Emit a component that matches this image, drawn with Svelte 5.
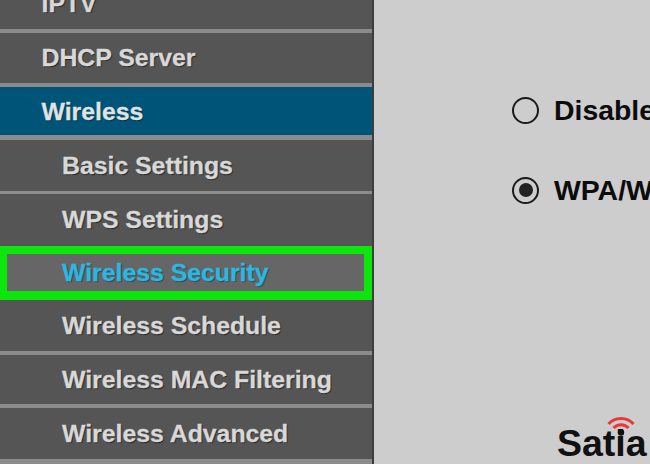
<script>
  const rows = [
    { label: 'IPTV', h: 29, sep: 4, cls: 'top first' },
    { label: 'DHCP Server', h: 50, sep: 4, cls: 'top' },
    { label: 'Wireless', h: 48, sep: 5, cls: 'top active' },
    { label: 'Basic Settings', h: 51, sep: 3, cls: 'sub' },
    { label: 'WPS Settings', h: 52, sep: 0, cls: 'sub' },
    { label: 'Wireless Security', h: 54, sep: 0, cls: 'sub selected' },
    { label: 'Wireless Schedule', h: 51, sep: 4, cls: 'sub' },
    { label: 'Wireless MAC Filtering', h: 49, sep: 4, cls: 'sub' },
    { label: 'Wireless Advanced', h: 51, sep: 4, cls: 'sub' }
  ];
</script>

<div class="page">
  <nav class="side">
    {#each rows as r}
      <div class="row {r.cls}" style="height:{r.h}px;margin-bottom:{r.sep}px"><span>{r.label}</span></div>
    {/each}
  </nav>
  <main class="panel">
    <div class="opt first-opt"><span class="radio"></span><b>Disabled</b></div>
    <div class="opt"><span class="radio on"></span><b>WPA/WPA2</b></div>
    <div class="logo">
      <svg class="wifi" viewBox="0 0 28 20" width="28" height="20" aria-hidden="true">
        <path d="M1.5 8 C8 0.5 20 0.5 26.5 8" fill="none" stroke="#e8383a" stroke-width="3"/>
        <path d="M6.5 12 C10.5 7.5 17.5 7.5 21.5 12" fill="none" stroke="#e8383a" stroke-width="3"/>
        <circle cx="14" cy="16.5" r="3.2" fill="#111"/>
      </svg>
      <span>Satia</span>
    </div>
  </main>
</div>

<style>
  :global(body) { margin: 0; }
  .page {
    width: 650px;
    height: 464px;
    overflow: hidden;
    display: flex;
    background: #cdcdcd;
    font-family: "Liberation Sans", Arial, sans-serif;
  }
  .side {
    width: 372px;
    flex: none;
    border-right: 2px solid #3e3e3e;
    background: #8b8b8b;
    display: flex;
    flex-direction: column;
    overflow: hidden;
  }
  .row {
    flex: none;
    display: flex;
    align-items: center;
    background: #555555;
    color: #d8d8d8;
    font-weight: 700;
    font-size: 24.8px;
    box-sizing: border-box;
    text-shadow: 1px 1px 1px #262626;
    -webkit-text-stroke: 0.3px currentColor;
    white-space: nowrap;
  }
  .top { padding-left: 41.5px; }
  .sub { padding-left: 62px; }
  .first { align-items: flex-end; padding-bottom: 11px; }
  .active { background: #005478; color: #dfe3e6; text-shadow: 1px 1px 1px #0a3042; padding-top: 2px; }
  .selected {
    background: #666666;
    border: solid #0ce60c;
    border-width: 8px 8px 9px 7px;
    padding-left: 55px;
    color: #2bb8e0;
    text-shadow: 1px 1px 1px #33474f;
  }
  .panel {
    flex: 1;
    display: flex;
    flex-direction: column;
    padding-left: 138px;
    min-width: 0;
    overflow: hidden;
    color: #0c0c0c;
    position: relative;
  }
  .opt {
    display: flex;
    align-items: center;
    gap: 15px;
    font-size: 28.4px;
    height: 40px;
    white-space: nowrap;
    margin-bottom: 40px;
  }
  .first-opt { margin-top: 90px; }
  .radio {
    width: 27px;
    height: 27px;
    box-sizing: border-box;
    border: 2px solid #1a1a1a;
    border-radius: 50%;
    flex: none;
    display: flex;
    align-items: center;
    justify-content: center;
  }
  .radio.on::after {
    content: "";
    width: 14px;
    height: 14px;
    border-radius: 50%;
    background: #222;
  }
  .logo {
    position: absolute;
    left: 183px;
    top: 416px;
    font-size: 37.5px;
    font-weight: 700;
    line-height: 1;
    padding-top: 9px;
    color: #111;
  }
  .wifi { position: absolute; left: 50px; top: 0; }
</style>
